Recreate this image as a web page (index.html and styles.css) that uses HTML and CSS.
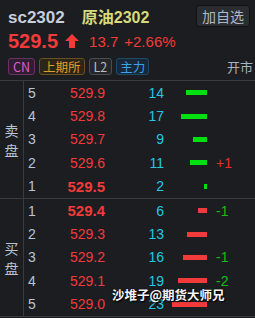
FILE: index.html
```html
<!DOCTYPE html>
<html lang="zh">
<head>
  <meta charset="UTF-8" />
  <title>sc2302 盘口</title>
  <link rel="stylesheet" href="styles.css">
</head>
<body>
  <div class="quote">
    <div class="top-row">
      <div class="title">
        <span class="code">sc2302</span>
        <span class="name">原油2302</span>
      </div>
      <button class="fav-btn">加自选</button>
    </div>
    <div class="price-row">
      <span class="last">529.5</span>
      <svg class="arrow" width="14" height="14" viewBox="0 0 14 14">
        <path d="M7 0 L14 7 L10 7 L10 14 L4 14 L4 7 L0 7 Z" fill="#f23a3a"/>
      </svg>
      <span class="chg">13.7</span>
      <span class="chg">+2.66%</span>
    </div>
    <div class="tag-row">
      <div class="tags">
        <span class="tag tag-cn">CN</span>
        <span class="tag tag-ex">上期所</span>
        <span class="tag tag-l2">L2</span>
        <span class="tag tag-main">主力</span>
      </div>
      <span class="status">开市</span>
    </div>
  </div>

  <div class="book">
    <div class="side">
      <div class="side-label">卖<br>盘</div>
      <div class="rows">
        <div class="row"><span class="lvl">5</span><span class="px">529.9</span><span class="vol">14</span><span class="bar-cell"><i class="bar green" style="width:21px"></i></span><span class="delta"></span></div>
        <div class="row"><span class="lvl">4</span><span class="px">529.8</span><span class="vol">17</span><span class="bar-cell"><i class="bar green" style="width:26px"></i></span><span class="delta"></span></div>
        <div class="row"><span class="lvl">3</span><span class="px">529.7</span><span class="vol">9</span><span class="bar-cell"><i class="bar green" style="width:14px"></i></span><span class="delta"></span></div>
        <div class="row"><span class="lvl">2</span><span class="px">529.6</span><span class="vol">11</span><span class="bar-cell"><i class="bar green" style="width:17px"></i></span><span class="delta up">+1</span></div>
        <div class="row"><span class="lvl">1</span><span class="px best">529.5</span><span class="vol">2</span><span class="bar-cell"><i class="bar green" style="width:3px"></i></span><span class="delta"></span></div>
      </div>
    </div>
    <div class="side">
      <div class="side-label">买<br>盘</div>
      <div class="rows">
        <div class="row"><span class="lvl">1</span><span class="px best">529.4</span><span class="vol">6</span><span class="bar-cell"><i class="bar red" style="width:9px"></i></span><span class="delta down">-1</span></div>
        <div class="row"><span class="lvl">2</span><span class="px">529.3</span><span class="vol">13</span><span class="bar-cell"><i class="bar red" style="width:20px"></i></span><span class="delta"></span></div>
        <div class="row"><span class="lvl">3</span><span class="px">529.2</span><span class="vol">16</span><span class="bar-cell"><i class="bar red" style="width:24px"></i></span><span class="delta down">-1</span></div>
        <div class="row"><span class="lvl">4</span><span class="px">529.1</span><span class="vol">19</span><span class="bar-cell"><i class="bar red" style="width:29px"></i></span><span class="delta down">-2</span></div>
        <div class="row"><span class="lvl">5</span><span class="px">529.0</span><span class="vol">23</span><span class="bar-cell"><i class="bar red" style="width:35px"></i></span><span class="delta"></span></div>
      </div>
    </div>
    <div class="watermark">沙堆子@期货大师兄</div>
  </div>
</body>
</html>
```

FILE: styles.css
```css
body {
  margin: 0;
  width: 255px;
  height: 318px;
  overflow: hidden;
  background-color: #1c1d21;
  font-family: "Liberation Sans", "Noto Sans CJK SC", sans-serif;
  color: #b8c4d6;
}

.quote {
  height: 80px;
  box-sizing: border-box;
  padding: 5px 5px 0 8px;
}

.top-row {
  display: flex;
  justify-content: space-between;
  align-items: center;
  height: 22px;
}

.title {
  display: flex;
  align-items: baseline;
  gap: 17px;
}

.code {
  font-size: 17px;
  font-weight: bold;
  color: #c6cedc;
}

.name {
  font-size: 16px;
  font-weight: bold;
  color: #d6da78;
}

.fav-btn {
  height: 22px;
  padding: 0 5px;
  background-color: #2b2c30;
  color: #aeb8c8;
  border: 1px solid #111214;
  border-radius: 3px;
  font-family: "Noto Sans CJK SC", sans-serif;
  font-size: 14px;
  line-height: 20px;
}

.price-row {
  display: flex;
  align-items: center;
  height: 26px;
  margin-top: 1px;
  color: #f23a3a;
}

.last {
  font-size: 20px;
  font-weight: bold;
}

.arrow {
  margin: 0 10px 0 7px;
}

.chg {
  font-size: 15px;
  margin-right: 6px;
}

.tag-row {
  display: flex;
  justify-content: space-between;
  align-items: center;
  margin-top: 3px;
}

.tags {
  display: flex;
  gap: 4px;
}

.tag {
  height: 17px;
  box-sizing: border-box;
  padding: 0 3px;
  border: 1px solid;
  border-radius: 3px;
  font-size: 12.5px;
  line-height: 15px;
  font-family: "Noto Sans CJK SC", sans-serif;
}

.tag-cn {
  color: #e05ccc;
  border-color: #6e2e68;
  background-color: #2e1f30;
  padding: 0 4px;
}

.tag-ex {
  color: #e2a02a;
  border-color: #6a5020;
  background-color: #2c2518;
}

.tag-l2 {
  color: #b8bcc4;
  border-color: #4a4c52;
  background-color: #25262a;
  padding: 0 4px;
}

.tag-main {
  color: #3ea2e8;
  border-color: #1e4a6a;
  background-color: #17283a;
}

.status {
  font-size: 13px;
  color: #aab2bc;
  font-family: "Noto Sans CJK SC", sans-serif;
  margin-right: -3px;
}

.book {
  position: relative;
  border-top: 1px solid #3a3b40;
}

.side {
  display: flex;
  height: 117px;
  border-bottom: 1px solid #3a3b40;
}

.side-label {
  width: 23px;
  flex: none;
  border-right: 1px solid #3a3b40;
  display: flex;
  align-items: center;
  justify-content: center;
  font-family: "Noto Sans CJK SC", sans-serif;
  font-size: 14px;
  line-height: 20px;
  text-align: center;
}

.rows {
  flex: 1;
  display: grid;
  grid-template-rows: repeat(5, 1fr);
}

.row {
  display: grid;
  grid-template-columns: 26px 51px 59px 43px 1fr;
  align-items: center;
  font-size: 14px;
  padding-left: 4px;
}

.lvl {
  color: #b8c4d6;
}

.px {
  text-align: right;
  color: #f23a3a;
}

.px.best {
  font-weight: bold;
  font-size: 15px;
}

.vol {
  text-align: right;
  color: #22c8e0;
}

.bar-cell {
  display: flex;
  justify-content: flex-end;
}

.bar {
  display: block;
  height: 5px;
}

.bar.green {
  background-color: #00e010;
}

.bar.red {
  background-color: #f23a3a;
}

.delta {
  padding-left: 9px;
}

.delta.up {
  color: #e03030;
}

.delta.down {
  color: #10c010;
}

.watermark {
  position: absolute;
  left: 112px;
  top: 204px;
  font-family: "Noto Sans CJK SC", sans-serif;
  font-size: 12.5px;
  font-weight: bold;
  color: #f4f4f4;
  text-shadow: 0 0 2px #000, 1px 1px 1px #000;
  white-space: nowrap;
}
```
